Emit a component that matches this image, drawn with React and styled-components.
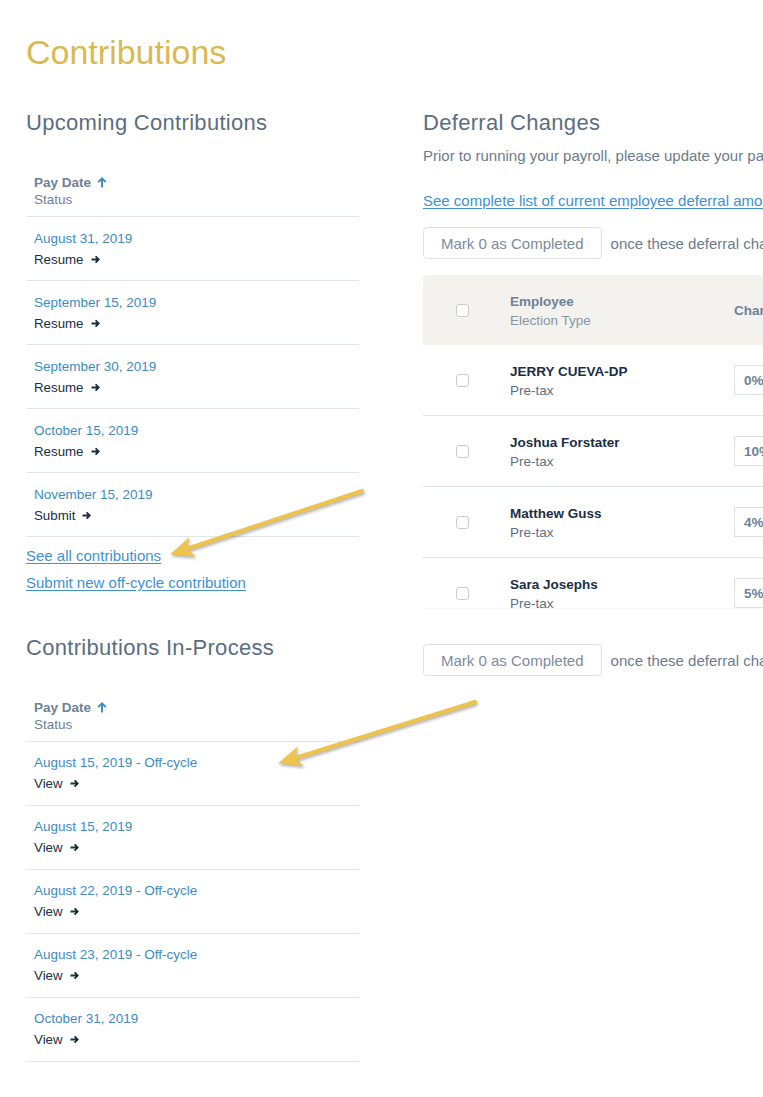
import React from 'react';
import styled, { createGlobalStyle } from 'styled-components';

const GlobalStyle = createGlobalStyle`
  html, body {
    margin: 0;
    padding: 0;
    background: #ffffff;
    overflow: hidden;
  }
  body {
    font-family: "Liberation Sans", Arial, Helvetica, sans-serif;
    -webkit-font-smoothing: antialiased;
  }
`;

const colors = {
  gold: '#d7ba52',
  slate: '#5b6e81',
  label: '#6d8197',
  muted: '#6b7c8d',
  blue: '#3c8bc5',
  link: '#4191cf',
  navy: '#1b2e44',
  line: '#e0e5eb',
};

const Page = styled.div`
  position: relative;
  width: 1300px;
  min-height: 1097px;
  padding: 30px 0 0 26px;
  box-sizing: border-box;
`;

const Title = styled.h1`
  margin: 0 0 35px;
  font-size: 34px;
  line-height: 44px;
  font-weight: 400;
  color: ${colors.gold};
`;

const Columns = styled.div`
  display: grid;
  grid-template-columns: 333px 720px;
  column-gap: 64px;
  align-items: start;
`;

const Column = styled.div`
  display: flex;
  flex-direction: column;
`;

const SectionHeading = styled.h2`
  margin: ${({ $top }) => $top || 0}px 0 ${({ $bottom }) => $bottom ?? 29}px;
  font-size: 22px;
  line-height: 28px;
  font-weight: 400;
  letter-spacing: 0.3px;
  color: ${colors.slate};
`;

/* ---------- contributions table (left) ---------- */

const HeadCell = styled.div`
  padding: 8px 8px;
  border-bottom: 1px solid ${colors.line};
  font-size: 13.5px;
  line-height: 17px;
`;

const HeadLabel = styled.div`
  display: flex;
  align-items: center;
  gap: 6px;
  font-weight: 700;
  color: ${colors.label};
`;

const HeadSub = styled.div`
  color: ${colors.label};
`;

const Row = styled.div`
  padding: 10.5px 8px;
  border-bottom: 1px solid ${colors.line};
`;

const DateText = styled.div`
  font-size: 13.5px;
  line-height: 21px;
  color: ${colors.blue};
`;

const StatusText = styled.div`
  display: flex;
  align-items: center;
  gap: 7px;
  font-size: 13.3px;
  line-height: 21px;
  color: ${colors.navy};
`;

const LinkList = styled.div`
  display: flex;
  flex-direction: column;
  padding-top: 5px;
`;

const TextLink = styled.a`
  font-size: 15px;
  line-height: ${({ $lh }) => $lh || 27}px;
  color: ${colors.link};
  text-decoration: underline;
  text-underline-offset: 2px;
  white-space: nowrap;
  cursor: pointer;
`;

const SortArrow = () => (
  <svg width="10" height="11" viewBox="0 0 10 11" fill="none">
    <path d="M5 10.5V1.5M1.2 5.2L5 1.4l3.8 3.8" stroke={colors.blue} strokeWidth="1.9" />
  </svg>
);

const GoArrow = () => (
  <svg width="9" height="9" viewBox="0 0 9 9" fill="none">
    <path d="M0.5 4.5h7M4.6 1.3l3.2 3.2-3.2 3.2" stroke={colors.navy} strokeWidth="1.8" />
  </svg>
);

const ContribTable = ({ rows }) => (
  <div>
    <HeadCell>
      <HeadLabel>
        Pay Date <SortArrow />
      </HeadLabel>
      <HeadSub>Status</HeadSub>
    </HeadCell>
    {rows.map((r) => (
      <Row key={r.date}>
        <DateText>{r.date}</DateText>
        <StatusText>
          {r.action} <GoArrow />
        </StatusText>
      </Row>
    ))}
  </div>
);

/* ---------- deferral changes (right) ---------- */

const Intro = styled.p`
  margin: 0 0 23px;
  font-size: 15px;
  line-height: 22px;
  color: ${colors.muted};
  white-space: nowrap;
`;

const ActionRow = styled.div`
  display: flex;
  align-items: center;
  gap: 9px;
  margin-top: ${({ $top }) => $top || 0}px;
  white-space: nowrap;
`;

const MarkButton = styled.button`
  height: 32px;
  padding: 0 17px;
  border: 1px solid #dde1e6;
  border-radius: 4px;
  background: #ffffff;
  font-family: inherit;
  font-size: 15px;
  color: #7b8c9d;
  cursor: pointer;
`;

const ActionNote = styled.span`
  font-size: 15px;
  color: ${colors.muted};
`;

const TableScroller = styled.div`
  margin-top: 16px;
  height: 333px;
  overflow: hidden;
  box-shadow: 0 1px 1px rgba(0, 0, 0, 0.03);
`;

const GridRow = styled.div`
  display: grid;
  grid-template-columns: 87px 224px 1fr;
  align-items: center;
  height: 70px;
  background: ${({ $head }) => ($head ? '#f3f2ee' : '#ffffff')};
  border-bottom: ${({ $head }) => ($head ? 'none' : `1px solid ${colors.line}`)};
`;

const CheckCell = styled.div`
  padding-left: 33px;
  display: flex;
  align-items: center;
`;

const Checkbox = styled.span`
  width: 11px;
  height: 11px;
  border: 1px solid #c9ccd0;
  border-radius: 3px;
  background: #ffffff;
`;

const NameCell = styled.div`
  font-size: 13.5px;
  line-height: 19px;
  padding-top: 1px;
`;

const NameText = styled.div`
  font-weight: 700;
  color: ${({ $head }) => ($head ? colors.label : colors.navy)};
`;

const TypeText = styled.div`
  color: ${({ $head }) => ($head ? '#8795a4' : '#5f6f7f')};
`;

const ChangeHead = styled.div`
  font-size: 13.5px;
  font-weight: 700;
  color: ${colors.label};
`;

const PercentBox = styled.div`
  width: 80px;
  height: 28px;
  box-sizing: content-box;
  border: 1px solid #dde1e6;
  padding-left: 9px;
  display: flex;
  align-items: center;
  font-size: 13.5px;
  font-weight: 700;
  color: ${colors.label};
`;

/* ---------- annotation arrows ---------- */

const Overlay = styled.svg`
  position: absolute;
  top: 0;
  left: 0;
  pointer-events: none;
  overflow: visible;
  filter: drop-shadow(1px 2px 1.5px rgba(0, 0, 0, 0.3));
`;

const Arrow = ({ from, to }) => {
  const dx = to[0] - from[0];
  const dy = to[1] - from[1];
  const len = Math.hypot(dx, dy);
  const ux = dx / len;
  const uy = dy / len;
  const nx = -uy;
  const ny = ux;
  const head = 22;
  const half = 9.5;
  const bx = to[0] - ux * head;
  const by = to[1] - uy * head;
  const notchX = to[0] - ux * (head - 6);
  const notchY = to[1] - uy * (head - 6);
  const pts = [
    [to[0], to[1]],
    [bx + nx * half, by + ny * half],
    [notchX, notchY],
    [bx - nx * half, by - ny * half],
  ]
    .map((p) => p.join(','))
    .join(' ');
  return (
    <g fill="#eec34b" stroke="#eec34b">
      <line x1={from[0]} y1={from[1]} x2={notchX} y2={notchY} strokeWidth="4" strokeLinecap="round" />
      <polygon points={pts} strokeWidth="1" strokeLinejoin="round" />
    </g>
  );
};

const upcoming = [
  { date: 'August 31, 2019', action: 'Resume' },
  { date: 'September 15, 2019', action: 'Resume' },
  { date: 'September 30, 2019', action: 'Resume' },
  { date: 'October 15, 2019', action: 'Resume' },
  { date: 'November 15, 2019', action: 'Submit' },
];

const inProcess = [
  { date: 'August 15, 2019 - Off-cycle', action: 'View' },
  { date: 'August 15, 2019', action: 'View' },
  { date: 'August 22, 2019 - Off-cycle', action: 'View' },
  { date: 'August 23, 2019 - Off-cycle', action: 'View' },
  { date: 'October 31, 2019', action: 'View' },
];

const employees = [
  { name: 'JERRY CUEVA-DP', type: 'Pre-tax', change: '0%' },
  { name: 'Joshua Forstater', type: 'Pre-tax', change: '10%' },
  { name: 'Matthew Guss', type: 'Pre-tax', change: '4%' },
  { name: 'Sara Josephs', type: 'Pre-tax', change: '5%' },
];

const MarkRow = ({ top }) => (
  <ActionRow $top={top}>
    <MarkButton>Mark 0 as Completed</MarkButton>
    <ActionNote>once these deferral changes have been made in your payroll system.</ActionNote>
  </ActionRow>
);

export default function App() {
  return (
    <>
      <GlobalStyle />
      <Page>
        <Title>Contributions</Title>
        <Columns>
          <Column>
            <SectionHeading>Upcoming Contributions</SectionHeading>
            <ContribTable rows={upcoming} />
            <LinkList>
              <TextLink>See all contributions</TextLink>
              <TextLink>Submit new off-cycle contribution</TextLink>
            </LinkList>
            <SectionHeading $top={37.5}>Contributions In-Process</SectionHeading>
            <ContribTable rows={inProcess} />
          </Column>

          <Column>
            <SectionHeading $bottom={7.5}>Deferral Changes</SectionHeading>
            <Intro>
              Prior to running your payroll, please update your payroll system with the following deferral changes.
            </Intro>
            <TextLink $lh={22}>See complete list of current employee deferral amounts</TextLink>
            <MarkRow top={15.5} />
            <TableScroller>
              <GridRow $head>
                <CheckCell>
                  <Checkbox />
                </CheckCell>
                <NameCell>
                  <NameText $head>Employee</NameText>
                  <TypeText $head>Election Type</TypeText>
                </NameCell>
                <ChangeHead>Change</ChangeHead>
              </GridRow>
              {employees.map((e) => (
                <GridRow key={e.name}>
                  <CheckCell>
                    <Checkbox />
                  </CheckCell>
                  <NameCell>
                    <NameText>{e.name}</NameText>
                    <TypeText>{e.type}</TypeText>
                  </NameCell>
                  <PercentBox>{e.change}</PercentBox>
                </GridRow>
              ))}
            </TableScroller>
            <MarkRow top={36} />
          </Column>
        </Columns>

        <Overlay width="763" height="1097" viewBox="0 0 763 1097">
          <Arrow from={[362, 491]} to={[171, 554]} />
          <Arrow from={[475, 702]} to={[279, 763]} />
        </Overlay>
      </Page>
    </>
  );
}
